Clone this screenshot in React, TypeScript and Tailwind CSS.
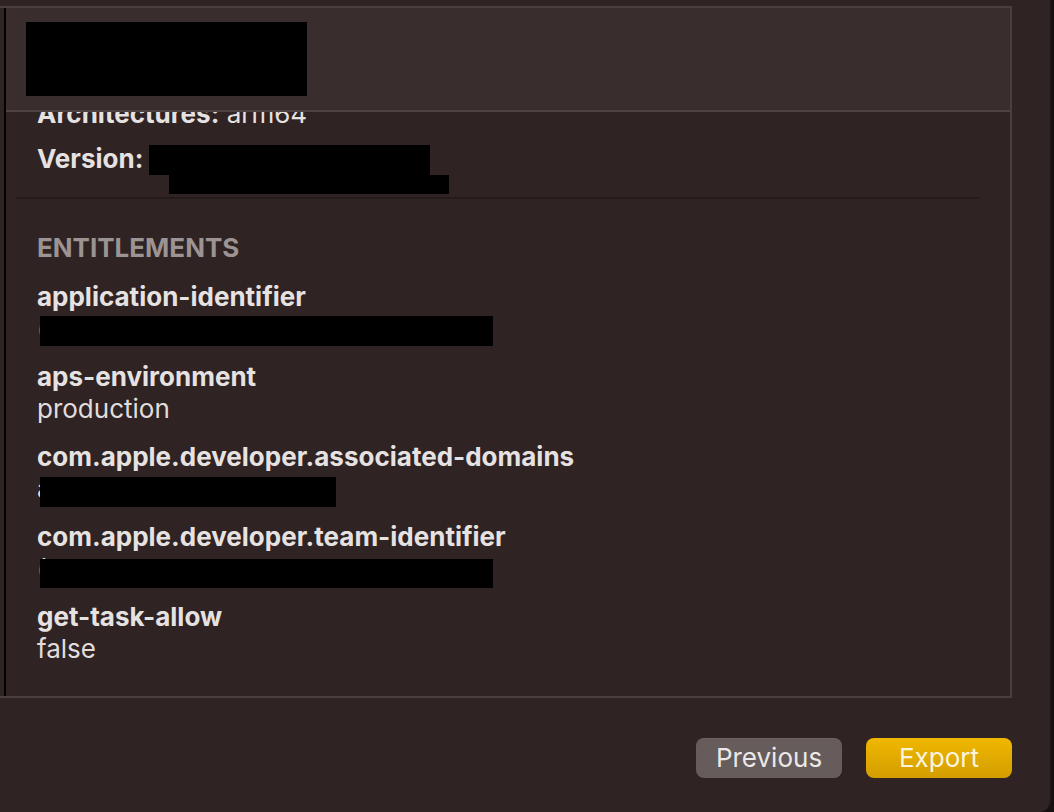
import React from "react";

const font = { fontFamily: "Inter, 'Noto Sans', 'Liberation Sans', sans-serif" };

function Entry({
  label,
  value,
  box,
}: {
  label: string;
  value: string;
  box?: { left: string; top: string; w: string; h: string };
}) {
  return (
    <div className="mt-[18px] first:mt-0">
      <div className="h-[30px] leading-[30px] font-bold text-[#e7e2e2]">{label}</div>
      <div className="relative h-[32px] pt-[2px] text-[#e2dddd]">
        <div className="h-[30px] leading-[30px]">{value}</div>
        {box && <div className={`absolute bg-black ${box.left} ${box.top} ${box.w} ${box.h}`} />}
      </div>
    </div>
  );
}

export default function App() {
  return (
    <div className="w-[1054px] h-[812px] bg-[#151111] overflow-hidden" style={font}>
      <div className="w-[1052px] h-[812px] bg-[#2f2323] rounded-br-[12px] border-r-2 border-[#1c1616] pt-[6px] flex flex-col text-[26px]">
        {/* panel */}
        <div className="w-[1012px] h-[692px] border-t-2 border-r-2 border-b-2 border-[#4a3e3e] flex">
          <div className="ml-[4px] w-[2px] bg-black" />
          <div className="flex-1 flex flex-col min-w-0">
            {/* header */}
            <div className="h-[104px] bg-[#3a2d2d] border-b-2 border-[#4e4242] pt-[14px] pl-[20px] shrink-0">
              <div className="w-[281px] h-[74px] bg-black" />
            </div>
            {/* scrolled content */}
            <div className="flex-1 overflow-hidden">
              <div className="-mt-[13px] pl-[31px]">
                <div className="h-[30px] leading-[30px] text-[#e7e2e2]">
                  <span className="font-bold">Architectures:</span> arm64
                </div>
                <div className="relative mt-[15px] h-[30px] leading-[30px] text-[#e7e2e2]">
                  <span className="font-bold">Version:</span>
                  <div className="absolute left-[112px] top-[1px] w-[281px] h-[30px] bg-black" />
                  <div className="absolute left-[132px] top-[31px] w-[280px] h-[19px] bg-black" />
                </div>
              </div>
              <div className="ml-[10px] mt-[23px] w-[964px] h-[2px] bg-[#251b1b]" />
              <div className="pl-[31px] mt-[34px]">
                <div className="h-[30px] leading-[30px] font-bold text-[#9c9393]">ENTITLEMENTS</div>
                <div className="mt-[19px]">
                  <Entry
                    label="application-identifier"
                    value="("
                    box={{ left: "left-[3px]", top: "top-[4px]", w: "w-[453px]", h: "h-[30px]" }}
                  />
                  <Entry label="aps-environment" value="production" />
                  <Entry
                    label="com.apple.developer.associated-domains"
                    value="a"
                    box={{ left: "left-[3px]", top: "top-[5px]", w: "w-[296px]", h: "h-[30px]" }}
                  />
                  <Entry
                    label="com.apple.developer.team-identifier"
                    value="("
                    box={{ left: "left-[3px]", top: "top-[7px]", w: "w-[453px]", h: "h-[29px]" }}
                  />
                  <Entry label="get-task-allow" value="false" />
                </div>
              </div>
            </div>
          </div>
        </div>
        {/* buttons */}
        <div className="mt-[40px] flex justify-end gap-[24px] pr-[38px]">
          <button className="w-[146px] h-[40px] rounded-[8px] bg-[#655c5b] text-[#ece8e8] leading-[40px] shadow-[inset_0_1px_0_rgba(255,255,255,0.06)]">
            Previous
          </button>
          <button className="w-[146px] h-[40px] rounded-[8px] bg-gradient-to-b from-[#f0b800] to-[#d39d00] text-[#faf3de] leading-[40px]">
            Export
          </button>
        </div>
      </div>
    </div>
  );
}
